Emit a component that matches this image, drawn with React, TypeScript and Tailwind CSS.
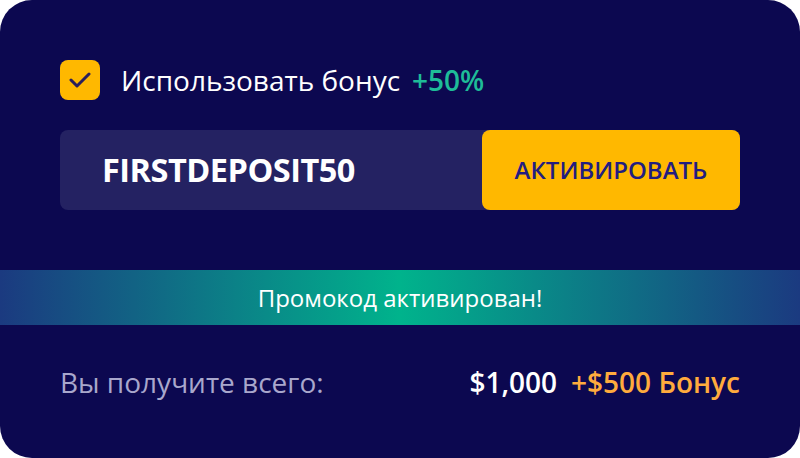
import React from "react";

export default function App() {
    return (
        <div className="w-[800px] h-[458px] bg-white" style={{ fontFamily: '"Open Sans", "Noto Sans", sans-serif' }}>
            <div className="w-full h-full rounded-[32px] bg-[#0c0850] flex flex-col pt-[60px] overflow-hidden">
                <div className="flex items-center px-[60px]">
                    <div className="w-10 h-10 rounded-lg bg-[#ffb800] flex items-center justify-center">
                        <svg width="24" height="16" viewBox="0 0 24 16" fill="none">
                            <path d="M3 8l6 6 12-12" stroke="#2a1f5c" strokeWidth="3" strokeLinecap="round" strokeLinejoin="round" />
                        </svg>
                    </div>
                    <span className="ml-[21px] text-[28px] text-white leading-none">Использовать бонус</span>
                    <span className="ml-[12px] text-[28px] font-semibold text-[#1ebc98] leading-none">+50%</span>
                </div>

                <div className="mx-[60px] mt-[30px] h-20 flex rounded-lg bg-[#242262]">
                    <div className="flex-1 flex items-center pl-[42px] text-[32.5px] font-bold text-white tracking-[-0.5px]">FIRSTDEPOSIT50</div>
                    <button className="w-[258px] rounded-lg bg-[#ffb800] text-[24px] font-semibold text-[#231d80]">АКТИВИРОВАТЬ</button>
                </div>

                <div className="mt-[60px] h-[55px] flex items-center justify-center text-[24px] text-white bg-[linear-gradient(to_right,#1b3a80,#00b38c_50%,#1b3a80)]">
                    Промокод активирован!
                </div>

                <div className="mt-[43px] px-[60px] flex items-center justify-between leading-none">
                    <span className="text-[28px] text-[#a9a7cc]">Вы получите всего:</span>
                    <div className="flex items-center gap-[14px] text-[28px] font-semibold">
                        <span className="text-white">$1,000</span>
                        <span className="text-[#ffab3d]">+$500 Бонус</span>
                    </div>
                </div>
            </div>
        </div>
    );
}
